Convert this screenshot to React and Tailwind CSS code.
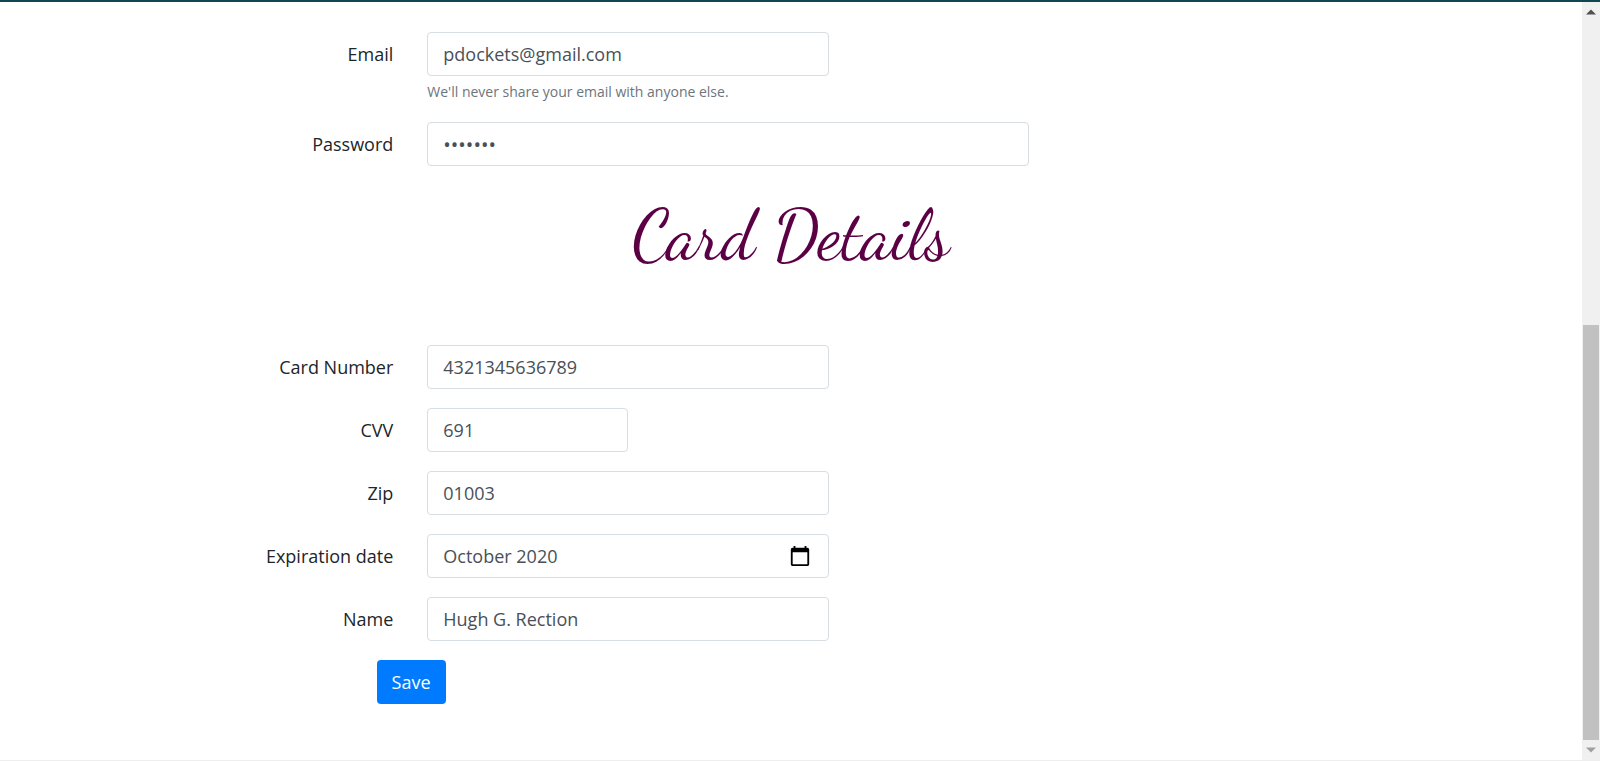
import React from "react";

const inputClass =
  "block h-11 w-full rounded border border-[#d8dde1] bg-white px-[15px] text-[#495057] outline-none focus:border-[#80bdff]";

const rowClass = "grid grid-cols-[26%_53%_1fr]";

function Field({ id, label, width, hint, picker, size = "text-lg", ...props }) {
  return (
    <div className={rowClass}>
      <label htmlFor={id} className="flex h-11 items-center justify-end pr-[18px] text-lg">
        {label}
      </label>
      <div className="pr-5 pl-4">
        <div className={`relative ${width}`}>
          <input
            id={id}
            className={`${inputClass} ${size}`}
            aria-describedby={hint ? `${id}-hint` : undefined}
            {...props}
          />
          {picker && (
            <button
              type="button"
              aria-label="Choose month"
              className="absolute inset-y-0 right-[18px] flex items-center"
            >
              <CalendarIcon />
            </button>
          )}
        </div>
        {hint && (
          <small id={`${id}-hint`} className="mt-1 block text-sm leading-[23px] text-[#6c757d]">
            {hint}
          </small>
        )}
      </div>
    </div>
  );
}

function CalendarIcon() {
  return (
    <svg width="22" height="22" viewBox="0 0 24 24" fill="#000000" aria-hidden="true">
      <path d="M20 3h-1V1h-2v2H7V1H5v2H4c-1.1 0-2 .9-2 2v16c0 1.1.9 2 2 2h16c1.1 0 2-.9 2-2V5c0-1.1-.9-2-2-2zm0 18H4V8h16v13z" />
    </svg>
  );
}

function ScrollRail() {
  return (
    <div aria-hidden="true" className="flex w-[18px] shrink-0 flex-col items-center bg-[#f0f0f0]">
      <div className="flex h-5 items-center">
        <svg width="10" height="6" viewBox="0 0 10 6">
          <path d="M5 0.5 10 5.5H0Z" fill="#505050" />
        </svg>
      </div>
      <div className="flex w-4 flex-1 flex-col">
        <div className="flex-[303]" />
        <div className="flex-[415] bg-[#c1c1c1]" />
      </div>
      <div className="flex h-5 items-center">
        <svg width="10" height="6" viewBox="0 0 10 6">
          <path d="M0 0.5H10L5 5.5Z" fill="#a0a0a0" />
        </svg>
      </div>
    </div>
  );
}

export default function App() {
  return (
    <div className="flex min-h-screen flex-col border-t-2 border-b-2 border-t-[#0f4652] border-b-[#eeeeee] bg-white font-['Segoe_UI','Open_Sans',sans-serif] text-[#212529]">
      <div className="flex flex-1">
        <main className="min-w-0 flex-1 pt-[30px] pb-14">
          <form onSubmit={(e) => e.preventDefault()}>
            <div className="flex flex-col gap-[19px]">
              <Field
                id="email"
                label="Email"
                type="email"
                width="w-1/2"
                defaultValue="pdockets@gmail.com"
                hint="We'll never share your email with anyone else."
              />
              <Field
                id="password"
                label="Password"
                type="password"
                width="w-3/4"
                size="text-xl"
                defaultValue="dockets"
              />
            </div>
            <h2 className="mt-[30px] mb-[69px] text-center font-['Dancing_Script',cursive] text-[70px] leading-20 font-normal text-[#5c0046]">
              Card Details
            </h2>
            <div className="flex flex-col gap-[19px]">
              <Field id="card-number" label="Card Number" type="text" width="w-1/2" defaultValue="4321345636789" />
              <Field id="cvv" label="CVV" type="text" width="w-1/4" defaultValue="691" />
              <Field id="zip" label="Zip" type="text" width="w-1/2" defaultValue="01003" />
              <Field
                id="expiration"
                label="Expiration date"
                type="text"
                width="w-1/2"
                picker
                defaultValue="October 2020"
              />
              <Field id="name" label="Name" type="text" width="w-1/2" defaultValue="Hugh G. Rection" />
              <div className="pl-[23.8%]">
                <button type="submit" className="h-11 rounded bg-[#007bff] px-[15px] text-lg text-white">
                  Save
                </button>
              </div>
            </div>
          </form>
        </main>
        <ScrollRail />
      </div>
    </div>
  );
}
